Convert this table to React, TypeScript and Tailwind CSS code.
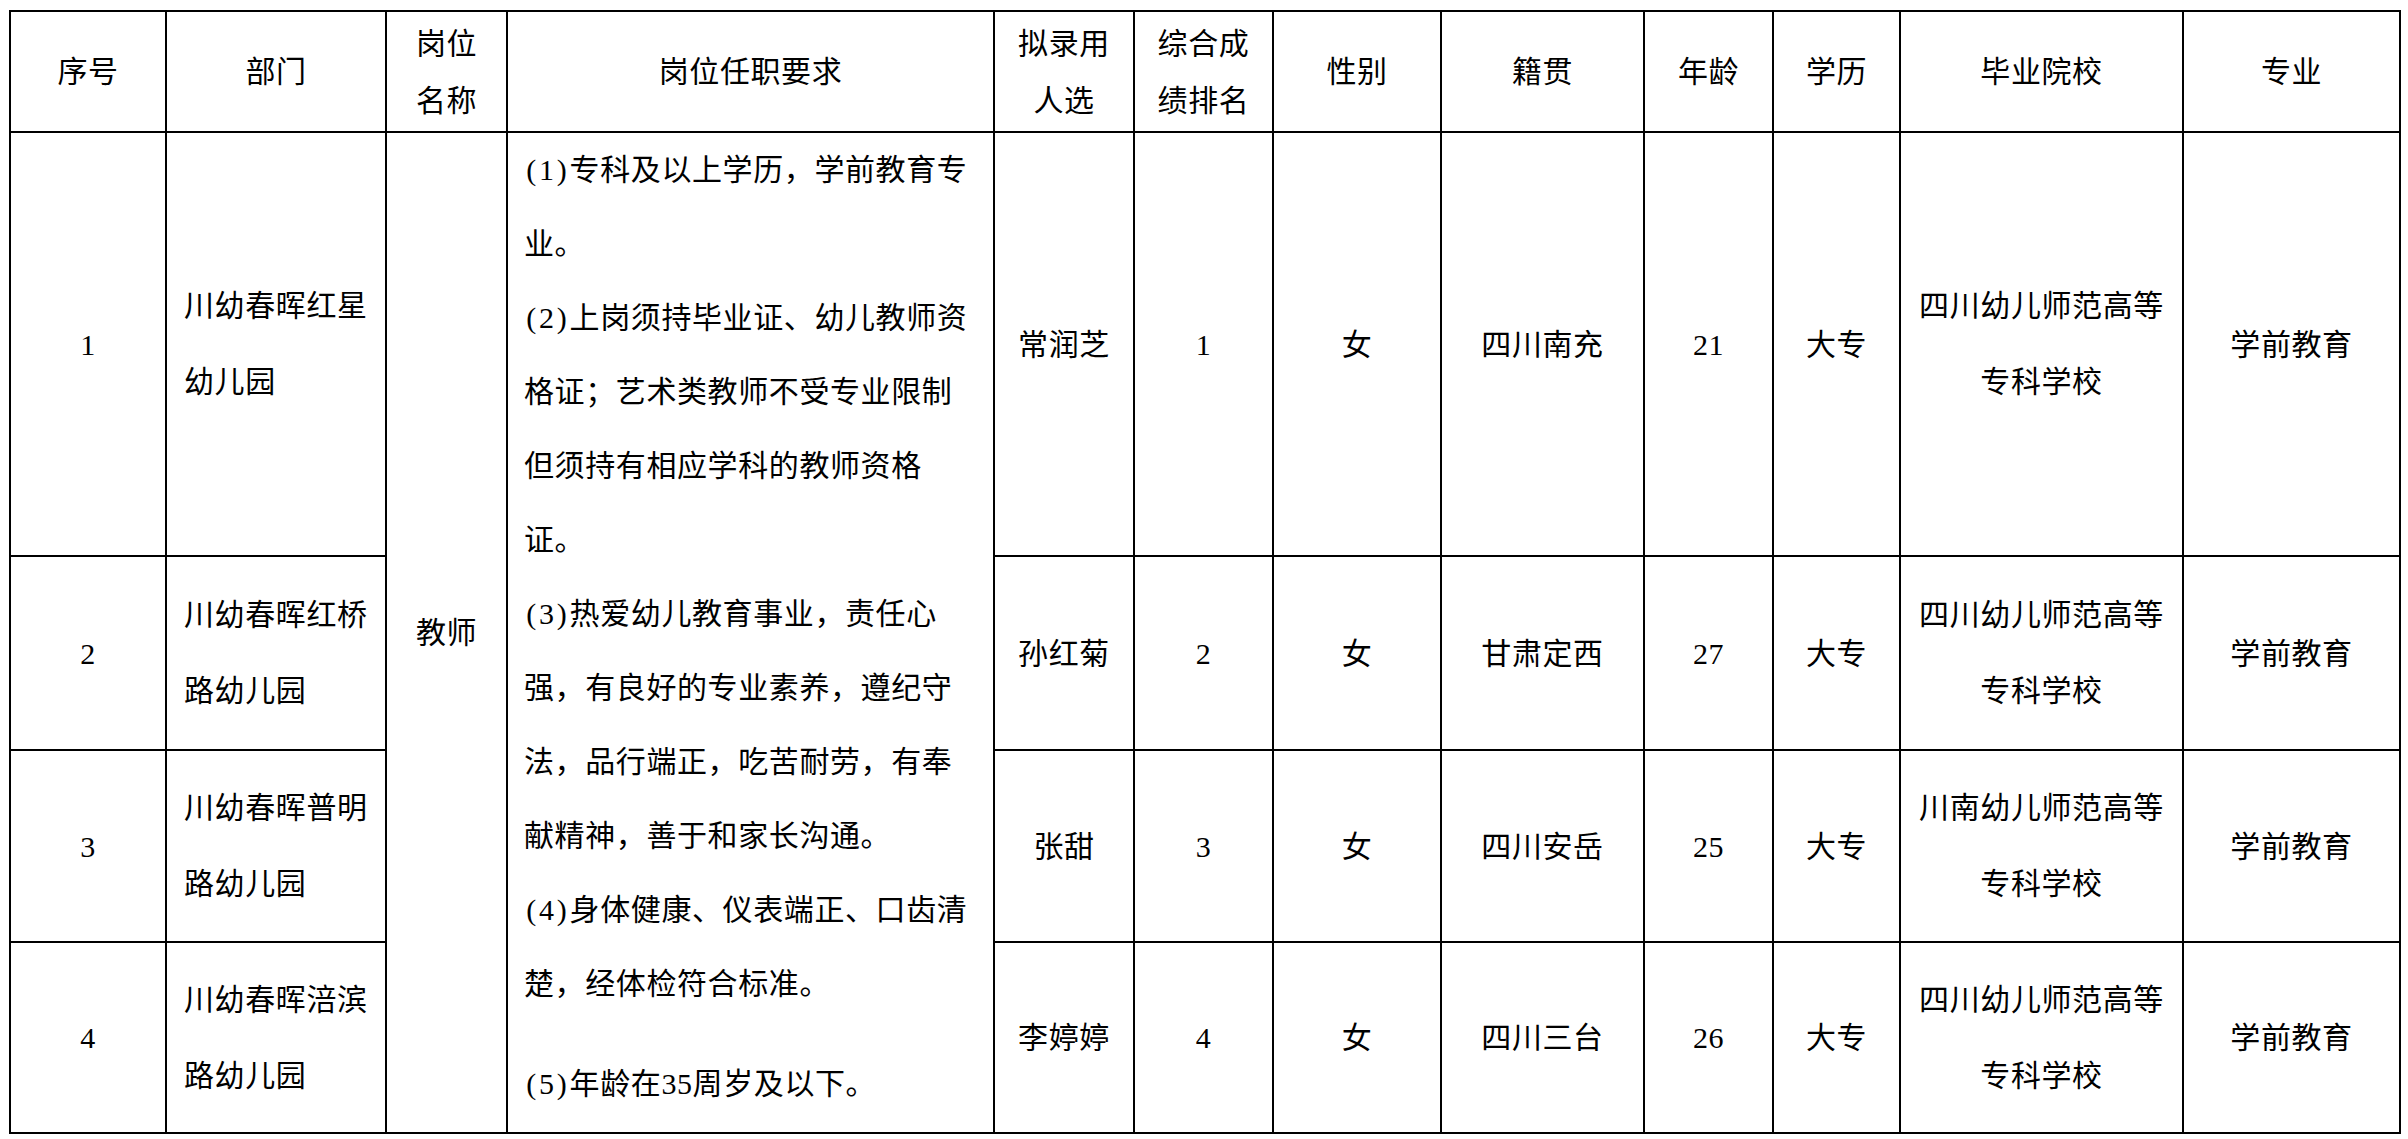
const cols = [156, 220, 121, 487, 140, 139, 168, 203, 129, 127, 283, 217];

const rows = [
  {
    no: "1",
    dept: ["川幼春晖红星", "幼儿园"],
    name: "常润芝",
    rank: "1",
    origin: "四川南充",
    age: "21",
    school: ["四川幼儿师范高等", "专科学校"],
    height: "h-[424px]",
  },
  {
    no: "2",
    dept: ["川幼春晖红桥", "路幼儿园"],
    name: "孙红菊",
    rank: "2",
    origin: "甘肃定西",
    age: "27",
    school: ["四川幼儿师范高等", "专科学校"],
    height: "h-[194px]",
  },
  {
    no: "3",
    dept: ["川幼春晖普明", "路幼儿园"],
    name: "张甜",
    rank: "3",
    origin: "四川安岳",
    age: "25",
    school: ["川南幼儿师范高等", "专科学校"],
    height: "h-[192px]",
  },
  {
    no: "4",
    dept: ["川幼春晖涪滨", "路幼儿园"],
    name: "李婷婷",
    rank: "4",
    origin: "四川三台",
    age: "26",
    school: ["四川幼儿师范高等", "专科学校"],
    height: "h-[191px]",
  },
];

// requirement lines, one line box each so the breaks match the document
const requirements: { num?: string; text: string; cls?: string }[] = [
  { num: "1", text: "专科及以上学历，学前教育专" },
  { text: "业。" },
  { num: "2", text: "上岗须持毕业证、幼儿教师资" },
  { text: "格证；艺术类教师不受专业限制" },
  { text: "但须持有相应学科的教师资格" },
  { text: "证。" },
  { num: "3", text: "热爱幼儿教育事业，责任心" },
  { text: "强，有良好的专业素养，遵纪守" },
  { text: "法，品行端正，吃苦耐劳，有奉" },
  { text: "献精神，善于和家长沟通。" },
  { num: "4", text: "身体健康、仪表端正、口齿清" },
  { text: "楚，经体检符合标准。" },
  { num: "5", text: "年龄在35周岁及以下。", cls: "mt-[26px]" },
];

const cell = "border-2 border-black p-0 text-center align-middle";

// half-width brackets like the document font
function Num({ n }: { n: string }) {
  return (
    <>
      <span className="inline-block w-[15px] text-center">(</span>
      {n}
      <span className="inline-block w-[15px] text-center">)</span>
    </>
  );
}

function Header() {
  const two = (a: string, b: string) => (
    <div className="leading-[57px]">
      <div>{a}</div>
      <div>{b}</div>
    </div>
  );
  return (
    <tr className="h-[121px]">
      <th className={`${cell} font-normal`}>序号</th>
      <th className={`${cell} font-normal`}>部门</th>
      <th className={`${cell} font-normal`}>{two("岗位", "名称")}</th>
      <th className={`${cell} font-normal`}>岗位任职要求</th>
      <th className={`${cell} font-normal`}>{two("拟录用", "人选")}</th>
      <th className={`${cell} font-normal`}>{two("综合成", "绩排名")}</th>
      <th className={`${cell} font-normal`}>性别</th>
      <th className={`${cell} font-normal`}>籍贯</th>
      <th className={`${cell} font-normal`}>年龄</th>
      <th className={`${cell} font-normal`}>学历</th>
      <th className={`${cell} font-normal`}>毕业院校</th>
      <th className={`${cell} font-normal`}>专业</th>
    </tr>
  );
}

export default function App() {
  return (
    <div className="min-h-screen bg-white pl-[9px] pt-[10px] text-black text-[30px] tracking-[0.6px] font-['Liberation_Serif','Noto_Sans_CJK_SC',serif]">
      <table className="table-fixed border-collapse w-[2390px]">
        <colgroup>
          {cols.map((w, i) => (
            <col key={i} style={{ width: w }} />
          ))}
        </colgroup>
        <thead>
          <Header />
        </thead>
        <tbody>
          {rows.map((r, i) => (
            <tr key={r.no} className={r.height}>
              <td className={cell}>{r.no}</td>
              <td className={`${cell} !text-left pl-[17px] leading-[76px] whitespace-nowrap`}>
                {r.dept.map((d) => (
                  <div key={d}>{d}</div>
                ))}
              </td>
              {i === 0 && (
                <>
                  <td rowSpan={4} className={cell}>
                    教师
                  </td>
                  <td rowSpan={4} className="border-2 border-black p-0 align-top text-left pl-[16px]">
                    {requirements.map((l) => (
                      <div key={l.text} className={`whitespace-nowrap leading-[74px] ${l.cls ?? ""}`}>
                        {l.num && <Num n={l.num} />}
                        {l.text}
                      </div>
                    ))}
                  </td>
                </>
              )}
              <td className={cell}>{r.name}</td>
              <td className={cell}>{r.rank}</td>
              <td className={cell}>女</td>
              <td className={cell}>{r.origin}</td>
              <td className={cell}>{r.age}</td>
              <td className={cell}>大专</td>
              <td className={`${cell} leading-[76px] whitespace-nowrap`}>
                {r.school.map((s) => (
                  <div key={s}>{s}</div>
                ))}
              </td>
              <td className={cell}>学前教育</td>
            </tr>
          ))}
        </tbody>
      </table>
    </div>
  );
}
